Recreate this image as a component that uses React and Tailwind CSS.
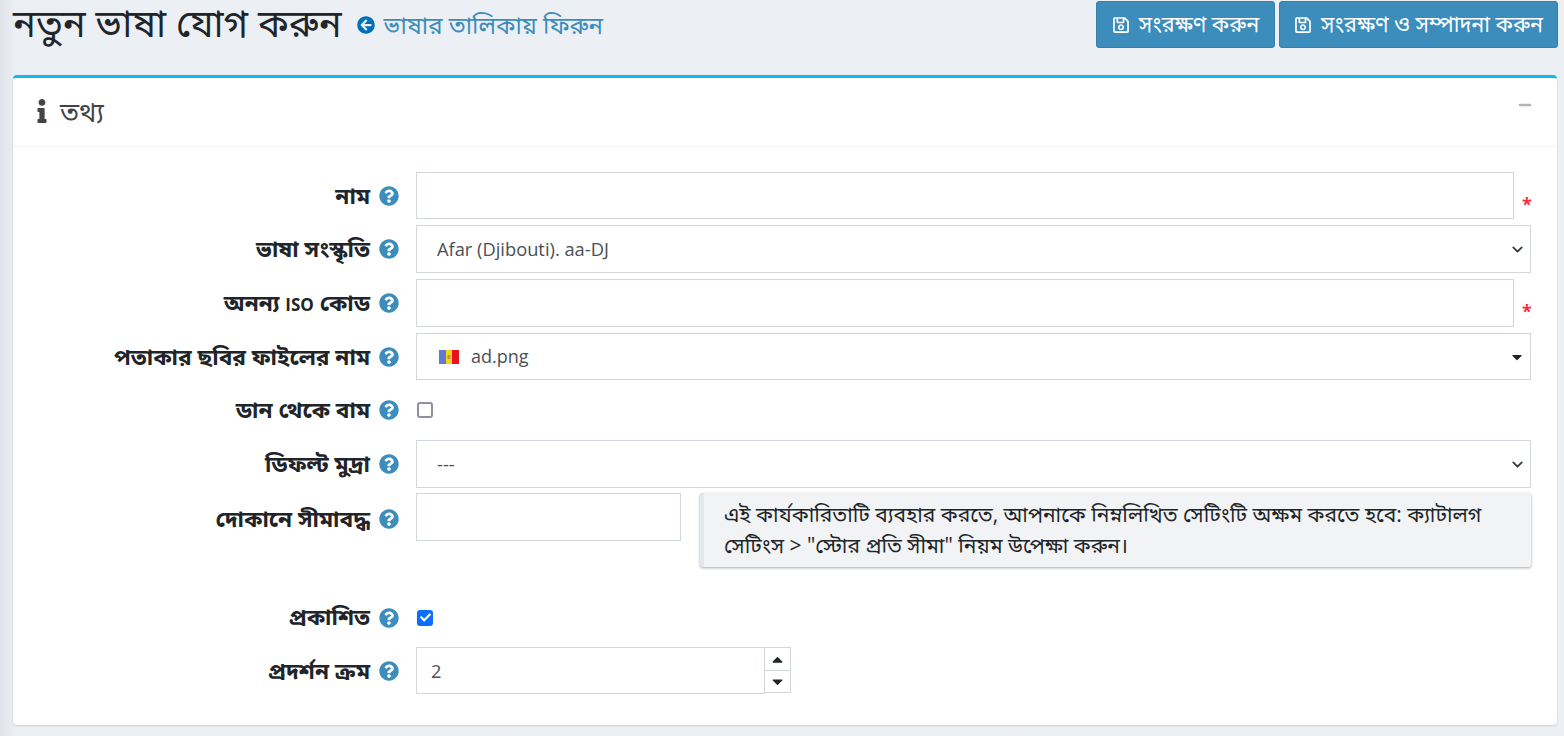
import { ChevronDown } from "lucide-react";
import { FaArrowCircleLeft, FaCaretDown, FaCaretUp, FaCheck, FaInfo, FaMinus, FaQuestionCircle, FaRegSave } from "react-icons/fa";

const fontStack = { fontFamily: '"Open Sans", "Noto Sans", "Noto Sans Bengali", "Lohit Bengali", sans-serif' };

const inputClass = "w-full h-full border border-[#d2d6de] bg-white text-[#495057] text-[18.3px] outline-none";

const Label = ({ children, shift = "" }) => (
  <div className={`w-[386px] shrink-0 flex justify-end items-center gap-[9px] h-[48px] mr-[17px] ${shift}`}>
    <span className="text-[22.7px] font-bold text-[#212529] whitespace-nowrap">{children}</span>
    <FaQuestionCircle className="text-[#3c8dbc] text-[20px] shrink-0" />
  </div>
);

const SaveButton = ({ text, width }) => (
  <button className={`h-[47px] ${width} bg-[#3c8dbc] border border-[#367fa9] rounded-[3px] text-white text-[21.5px] flex items-center justify-center gap-[9px] whitespace-nowrap`}>
    <FaRegSave className="text-[18px]" />
    {text}
  </button>
);

const Required = () => <span className="w-[17px] pl-[8px] pt-[16px] text-red-500 text-[18px] font-bold leading-none self-center">*</span>;

const Select = ({ value }) => (
  <div className="relative w-full h-full">
    <select className={`${inputClass} appearance-none pl-[20px]`} defaultValue={value}>
      <option>{value}</option>
    </select>
    <ChevronDown className="absolute right-[5px] top-[16px] w-[17px] h-[17px] text-[#343a40] pointer-events-none" strokeWidth={2.5} />
  </div>
);

const Checkbox = ({ checked }) =>
  checked ? (
    <div className="w-[16px] h-[16px] rounded-[3px] bg-[#0d6efd] flex items-center justify-center">
      <FaCheck className="text-white text-[11px]" />
    </div>
  ) : (
    <div className="w-[16px] h-[16px] rounded-[3px] border-2 border-[#8f8f9d] bg-white" />
  );

const Flag = () => (
  <svg width="20" height="14" viewBox="0 0 20 14" className="mr-[12px]">
    <rect width="7" height="14" fill="#5f7ad0" />
    <rect x="7" width="6" height="14" fill="#f7d21c" />
    <rect x="13" width="7" height="14" fill="#e8131f" />
    <rect x="8.5" y="5" width="3" height="4" fill="#c29a3a" />
  </svg>
);

export default function App() {
  return (
    <div style={fontStack} className="w-[1564px] h-[736px] overflow-hidden bg-[#ecf0f5] flex bg-gradient-to-r from-[#dfe2e7] from-0% to-[#ecf0f5] to-[1%]">
      <div className="w-[13px] shrink-0" />
      <div className="w-[1544px] shrink-0">
        <div className="h-[75px] flex justify-between">
          <div className="flex items-start">
            <h1 className="text-[38px] leading-[44px] text-[#212529] mr-[15px] font-normal whitespace-nowrap">নতুন ভাষা যোগ করুন</h1>
            <a className="flex items-center gap-[9px] text-[24px] leading-[50px] text-[#3c8dbc] whitespace-nowrap">
              <FaArrowCircleLeft className="text-[#0070ba] text-[18px]" />
              ভাষার তালিকায় ফিরুন
            </a>
          </div>
          <div className="flex gap-[4px] pt-[1px] -mr-[1px]">
            <SaveButton text="সংরক্ষণ করুন" width="w-[179px]" />
            <SaveButton text="সংরক্ষণ ও সম্পাদনা করুন" width="w-[279px]" />
          </div>
        </div>

        <div className="h-[650px] bg-white border-t-[3px] border-[#0fbbe6] rounded-[4px] shadow-[0_1px_2px_rgba(0,0,0,0.15)]">
          <div className="h-[69px] border-b border-[#f4f4f4] flex items-center justify-between pl-[17px] pr-[25px]">
            <div className="flex items-center gap-[6px] text-[#444] text-[27px]">
              <FaInfo className="text-[24px] text-[#444] -translate-y-[1px]" />
              তথ্য
            </div>
            <FaMinus className="text-[#b0b4bb] text-[14px] -translate-y-[7px]" />
          </div>

          <div className="pt-[25px] flex flex-col">
            <div className="flex h-[47px] mb-[6px]">
              <Label>নাম</Label>
              <div className="flex w-[1115px]">
                <input className={`${inputClass} flex-1`} />
                <Required />
              </div>
            </div>
            <div className="flex h-[48px] mb-[6px]">
              <Label>ভাষা সংস্কৃতি</Label>
              <div className="w-[1115px]"><Select value="Afar (Djibouti). aa-DJ" /></div>
            </div>
            <div className="flex h-[48px] mb-[6px]">
              <Label>অনন্য <span className="text-[17px]">ISO</span> কোড</Label>
              <div className="flex w-[1115px]">
                <input className={`${inputClass} flex-1`} />
                <Required />
              </div>
            </div>
            <div className="flex h-[47px] mb-[6px]">
              <Label>পতাকার ছবির ফাইলের নাম</Label>
              <div className="relative w-[1115px] h-full border border-[#d2d6de] flex items-center pl-[22px] text-[18px] text-[#495057]">
                <Flag />
                ad.png
                <FaCaretDown className="absolute right-[5px] top-[15px] text-[#212529] text-[16px]" />
              </div>
            </div>
            <div className="flex h-[48px] mb-[6px]">
              <Label>ডান থেকে বাম</Label>
              <div className="flex items-center pl-[1px]"><Checkbox /></div>
            </div>
            <div className="flex h-[48px] mb-[5px]">
              <Label>ডিফল্ট মুদ্রা</Label>
              <div className="w-[1115px]"><Select value="---" /></div>
            </div>
            <div className="flex h-[80px] mb-[36px]">
              <Label shift="translate-y-[2px]">দোকানে সীমাবদ্ধ</Label>
              <input className={`${inputClass} !w-[265px] !h-[48px]`} />
              <div className="ml-[19px] w-[831px] h-[74px] bg-[#f2f3f5] rounded-[3px] border-l-[4px] border-[#e4e7ed] shadow-[0_1px_3px_rgba(0,0,0,0.35)] pl-[20px] pr-[20px] pt-[6px] text-[21px] leading-[31px] text-[#212529]">
                এই কার্যকারিতাটি ব্যবহার করতে, আপনাকে নিম্নলিখিত সেটিংটি অক্ষম করতে হবে: ক্যাটালগ সেটিংস &gt; "স্টোর প্রতি সীমা" নিয়ম উপেক্ষা করুন।
              </div>
            </div>
            <div className="flex h-[17px] mb-[21px] items-center">
              <Label>প্রকাশিত</Label>
              <div className="pl-[1px]"><Checkbox checked /></div>
            </div>
            <div className="flex h-[47px]">
              <Label>প্রদর্শন ক্রম</Label>
              <input className={`${inputClass} !w-[349px] pl-[14px]`} defaultValue="2" />
              <div className="w-[26px] h-[46px] border border-l-0 border-[#d2d6de] flex flex-col">
                <div className="h-[23px] border-b border-[#d2d6de] flex items-center justify-center"><FaCaretUp className="text-[#212529] text-[17px]" /></div>
                <div className="flex-1 flex items-center justify-center"><FaCaretDown className="text-[#212529] text-[17px]" /></div>
              </div>
            </div>
          </div>
        </div>
      </div>
    </div>
  );
}
